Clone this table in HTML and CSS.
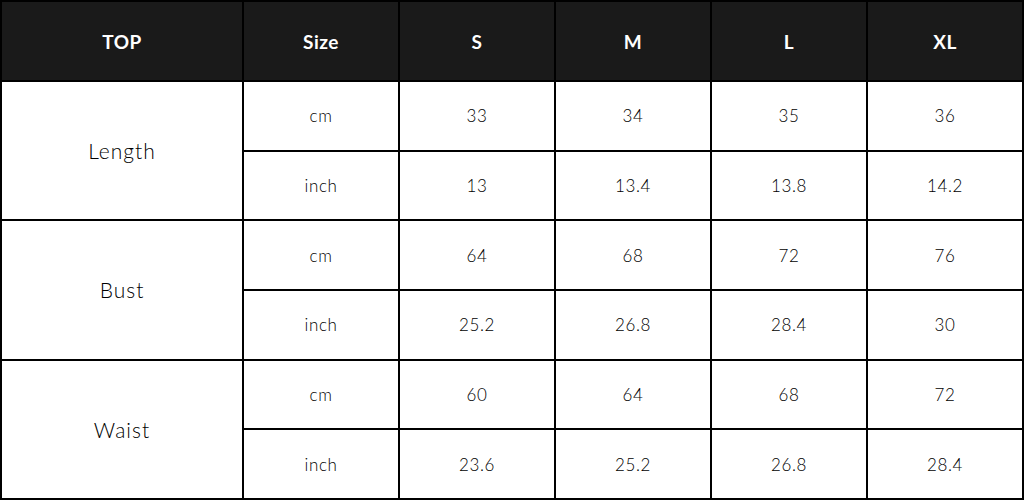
FILE: index.html
```
<!DOCTYPE html>
<html lang="en">

<head>
    <meta charset="UTF-8">
    <meta name="viewport" content="width=device-width, initial-scale=1.0">
    <title>Size Chart - Top</title>
    <link rel="stylesheet" href="styles.css">
</head>

<body>

    <table class="size-chart">
        <colgroup>
            <col class="col-part">
            <col class="col-unit">
            <col class="col-size">
            <col class="col-size">
            <col class="col-size">
            <col class="col-size">
        </colgroup>
        <thead>
            <tr>
                <th>TOP</th>
                <th>Size</th>
                <th>S</th>
                <th>M</th>
                <th>L</th>
                <th>XL</th>
            </tr>
        </thead>
        <tbody>
            <tr>
                <td rowspan="2" class="part">Length</td>
                <td class="unit">cm</td>
                <td>33</td>
                <td>34</td>
                <td>35</td>
                <td>36</td>
            </tr>
            <tr>
                <td class="unit">inch</td>
                <td>13</td>
                <td>13.4</td>
                <td>13.8</td>
                <td>14.2</td>
            </tr>
            <tr>
                <td rowspan="2" class="part">Bust</td>
                <td class="unit">cm</td>
                <td>64</td>
                <td>68</td>
                <td>72</td>
                <td>76</td>
            </tr>
            <tr>
                <td class="unit">inch</td>
                <td>25.2</td>
                <td>26.8</td>
                <td>28.4</td>
                <td>30</td>
            </tr>
            <tr>
                <td rowspan="2" class="part">Waist</td>
                <td class="unit">cm</td>
                <td>60</td>
                <td>64</td>
                <td>68</td>
                <td>72</td>
            </tr>
            <tr>
                <td class="unit">inch</td>
                <td>23.6</td>
                <td>25.2</td>
                <td>26.8</td>
                <td>28.4</td>
            </tr>
        </tbody>
    </table>

</body>

</html>
```

FILE: styles.css
```
body {
    margin: 0;
    background-color: #fff;
    font-family: "Lato", "DejaVu Sans", sans-serif;
    color: #000;
}

.size-chart {
    width: 1024px;
    height: 500px;
    border-collapse: collapse;
    table-layout: fixed;
    border: 2px solid #000;
}

.col-part {
    width: 242px;
}

.col-unit,
.col-size {
    width: 156px;
}

.size-chart th,
.size-chart td {
    border: 2px solid #000;
    text-align: center;
    vertical-align: middle;
    padding: 0;
}

.size-chart th {
    height: 78px;
    background-color: #1a1a1a;
    color: #fff;
    font-size: 19px;
    font-weight: 700;
    letter-spacing: 0.5px;
}

.size-chart td {
    height: 67px;
    font-size: 17px;
    font-weight: 300;
    letter-spacing: 0.6px;
    color: #000;
}

.size-chart td.part {
    font-size: 21px;
    letter-spacing: 1px;
}
```
